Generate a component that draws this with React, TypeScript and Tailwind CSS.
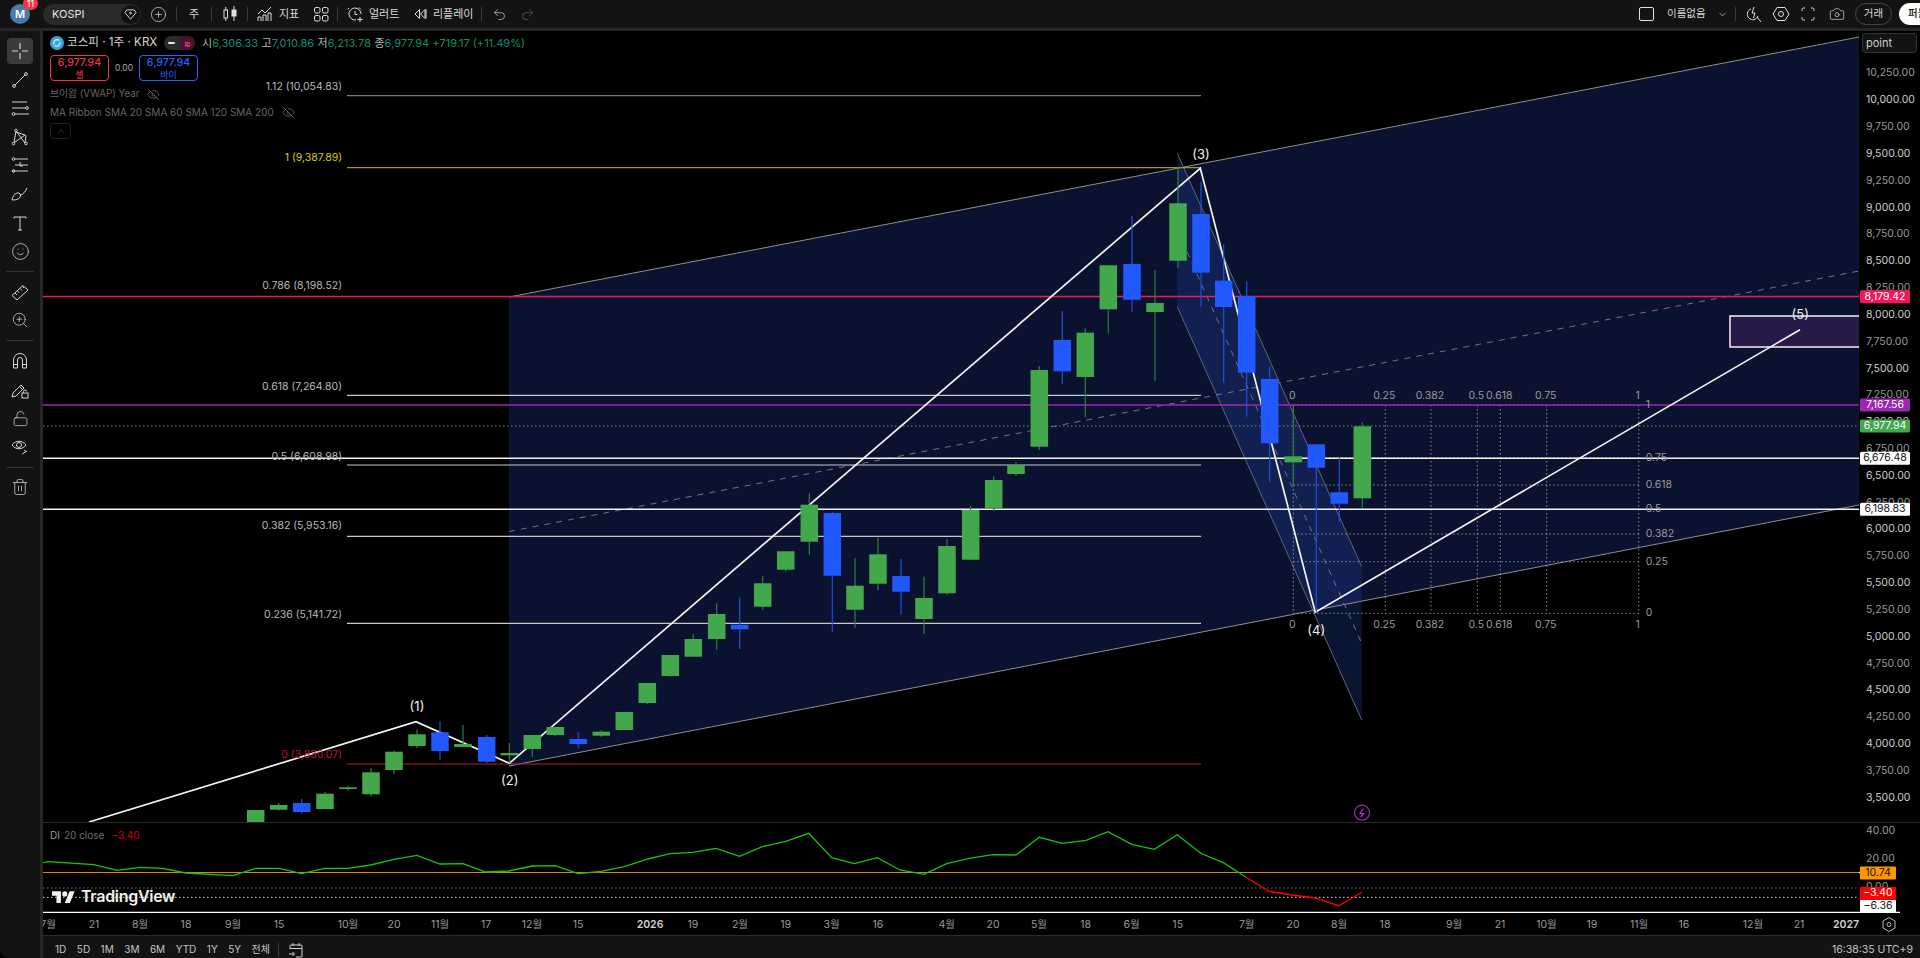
import { Camera, ChevronDown, CirclePlus, EyeOff, LockOpen, Redo2, Smile, Trash2, Undo2, ZoomIn } from "lucide-react";
import type { ReactNode } from "react";

// x, bodyTop, bodyBottom, wickTop, wickBottom, kind
type Candle = [number, number, number, number, number, "g" | "b"];

const candles: Candle[] = [
  [255.7, 810, 830, 810, 830, "g"],
  [278.7, 805, 809.7, 803, 810.7, "g"],
  [301.7, 803, 812, 799, 813.7, "b"],
  [325, 793.7, 809, 792, 809, "g"],
  [348, 787.3, 789, 786, 790.7, "g"],
  [371, 772.3, 794.3, 767.7, 796.7, "g"],
  [394, 751.7, 770, 750.7, 774.3, "g"],
  [417, 734.3, 746, 729.3, 748.3, "g"],
  [440, 732.3, 751, 721.3, 759.7, "b"],
  [463, 744, 747, 725, 747, "g"],
  [486.7, 737, 761.7, 735, 763.3, "b"],
  [509.3, 753, 755.3, 743, 763.3, "g"],
  [532.3, 735, 749, 735, 757, "g"],
  [555.3, 727, 735, 727, 736, "g"],
  [578.3, 739, 744, 732.3, 748, "b"],
  [601.3, 731.7, 735.7, 730.3, 737, "g"],
  [624.3, 712, 730, 712, 730, "g"],
  [647.3, 683, 703, 683, 704, "g"],
  [670.3, 655, 676, 655, 677, "g"],
  [693.3, 639, 656.7, 634, 657, "g"],
  [716.7, 614, 639, 603.3, 650, "g"],
  [739.7, 624.7, 629.3, 597.7, 649, "b"],
  [762.7, 583.3, 606.7, 576, 610, "g"],
  [785.7, 551.3, 569.7, 551.3, 571.7, "g"],
  [809.3, 504.7, 541.7, 493.3, 554.7, "g"],
  [832.3, 513, 575.7, 511.7, 631.7, "b"],
  [855, 585.7, 609.7, 558.3, 627.7, "g"],
  [878, 554.3, 583.7, 538, 590, "g"],
  [901, 576, 591.7, 559, 614.7, "b"],
  [924, 598, 619, 576.7, 633.7, "g"],
  [947, 546, 593.3, 539.3, 594.7, "g"],
  [970.7, 510, 559.7, 506, 559.7, "g"],
  [993.7, 480, 508, 476, 511, "g"],
  [1016, 465, 474, 462, 476, "g"],
  [1039.3, 370, 446.7, 366, 450, "g"],
  [1062.3, 340, 371.3, 311, 384, "b"],
  [1085.3, 332.7, 377, 328.3, 417.3, "g"],
  [1108.3, 265.3, 309.3, 265, 333.3, "g"],
  [1132, 264, 299.7, 216, 311.7, "b"],
  [1155, 303, 312, 270, 380.7, "g"],
  [1178, 203.3, 260.7, 166.7, 267.7, "g"],
  [1201, 214, 272.7, 181.7, 306.7, "b"],
  [1223.7, 280.7, 307, 244.3, 382.7, "b"],
  [1246.7, 296, 372.7, 281.3, 416.7, "b"],
  [1269.7, 379, 443.3, 366.7, 482.3, "b"],
  [1293.3, 456.3, 462.3, 406, 486, "g"],
  [1316.3, 444.3, 467.7, 444, 611.7, "b"],
  [1339.3, 492.3, 503.7, 457.7, 521.7, "b"],
  [1362.3, 426.3, 498.3, 422.3, 507.7, "g"],
];

const fibLevels = [
  { label: "1.12 (10,054.83)", y: 95.7, textY: 87, color: "#7a7a7a", text: "#b8b8b8" },
  { label: "1 (9,387.89)", y: 167.7, textY: 158, color: "#a4971c", text: "#d8c920" },
  { label: "0.786 (8,198.52)", y: 296.5, textY: 286.5, color: "#bdbdbd", text: "#b8b8b8" },
  { label: "0.618 (7,264.80)", y: 395.3, textY: 387, color: "#c8c8c8", text: "#b8b8b8" },
  { label: "0.5 (6,608.98)", y: 465, textY: 456.7, color: "#c8c8c8", text: "#b8b8b8" },
  { label: "0.382 (5,953.16)", y: 536.3, textY: 526.5, color: "#c8c8c8", text: "#b8b8b8" },
  { label: "0.236 (5,141.72)", y: 623.3, textY: 614.7, color: "#c8c8c8", text: "#b8b8b8" },
  { label: "0 (3,830.07)", y: 764, textY: 755, color: "#b71c2c", text: "#b71c2c" },
];

const gridX = [
  { x: 1293.3, label: "0" },
  { x: 1385.3, label: "0.25" },
  { x: 1431, label: "0.382" },
  { x: 1477.3, label: "0.5" },
  { x: 1500.3, label: "0.618" },
  { x: 1546.7, label: "0.75" },
  { x: 1638.7, label: "1" },
];

const gridY = [
  { y: 405, label: "1" },
  { y: 457.7, label: "0.75" },
  { y: 485, label: "0.618" },
  { y: 509.3, label: "0.5" },
  { y: 534, label: "0.382" },
  { y: 561.7, label: "0.25" },
  { y: 613.3, label: "0" },
];

const waves = [
  { label: "(1)", x: 417, y: 707.7 },
  { label: "(2)", x: 509.7, y: 781 },
  { label: "(3)", x: 1201, y: 155 },
  { label: "(4)", x: 1316.3, y: 631 },
  { label: "(5)", x: 1800.3, y: 315.5 },
];

const priceTags = [
  { label: "8,179.42", y: 296.7, bg: "#f0185b", fg: "#ffffff" },
  { label: "7,167.56", y: 405, bg: "#9c27b0", fg: "#ffffff" },
  { label: "6,977.94", y: 426, bg: "#43a84b", fg: "#ffffff" },
  { label: "6,676.48", y: 458.3, bg: "#ffffff", fg: "#111111" },
  { label: "6,198.83", y: 509.3, bg: "#ffffff", fg: "#111111" },
];

const diTags = [
  { label: "10.74", y: 873, bg: "#ff9800", fg: "#111111" },
  { label: "−3.40", y: 893.5, bg: "#ff0000", fg: "#ffffff" },
  { label: "−6.36", y: 906.5, bg: "#ffffff", fg: "#111111" },
];

const diGreen =
  "43,862.7 48,861.7 94,864.7 117,870.3 140,867.3 163,868.3 186,873 233,875.7 255.5,868.3 279,868.3 301.6,873.7 324.5,868.3 348,868.3 370.6,865 394,859.3 417,855.3 440,864 463,863.7 485.7,872 509,871 532,866 555,865.7 578,873.7 601,871.3 624.5,866.7 648,859 670,853.7 693,852.3 716,848.3 739.7,856.3 762.3,846.7 785.7,841.3 808.7,833.3 831.7,857.7 854.3,863.7 877.3,857.7 900,870 924,874.3 946.7,863.7 969.3,858.3 992.7,854.7 1016,855 1039.3,837.3 1062.3,843.3 1086,840.3 1108,831.7 1131.7,844.3 1154.3,849.3 1177.3,834.7 1200.7,853.3 1223.3,862.7 1245.7,877";
const diRed = "1245.7,877 1268.7,891.3 1291.7,895 1315,898 1338.7,905.7 1362,892.3";

const timeLabels: [number, string, boolean?][] = [
  [48, "7월"], [94, "21"], [140, "8월"], [186, "18"], [233, "9월"], [279, "15"], [348, "10월"], [394, "20"],
  [440, "11월"], [486, "17"], [532, "12월"], [578, "15"], [650, "2026", true], [693, "19"], [740, "2월"],
  [785.7, "19"], [831.7, "3월"], [878, "16"], [946.7, "4월"], [993, "20"], [1039, "5월"], [1085.7, "18"],
  [1131.7, "6월"], [1177.7, "15"], [1246.7, "7월"], [1293, "20"], [1339, "8월"], [1385, "18"], [1454, "9월"],
  [1500, "21"], [1546.5, "10월"], [1592, "19"], [1639, "11월"], [1684, "16"], [1753, "12월"], [1799, "21"],
  [1846, "2027", true],
];

const prices = Array.from({ length: 28 }, (_, i) => 10250 - i * 250);
const priceY = (p: number) => 315 + (8000 - p) * 0.1073;

const Draw = ({ size = 20, children }: { size?: number; children: ReactNode }) => (
  <svg width={size} height={size} viewBox="0 0 20 20" fill="none" stroke="#d4d4d4" strokeWidth="1">
    {children}
  </svg>
);

const Divider = () => <div className="h-[14px] w-px bg-[#3a3a3a]" />;

const ToolDivider = () => (
  <div className="flex h-[12px] items-center justify-center">
    <div className="h-px w-[28px] bg-[#333333]" />
  </div>
);

const Tool = ({ active, children }: { active?: boolean; children: ReactNode }) => (
  <div className="flex h-[28.6px] items-center justify-center">
    <div className={`flex h-[26px] w-[26px] items-center justify-center rounded-[4px] ${active ? "bg-[#3b3b3b]" : ""}`}>
      {children}
    </div>
  </div>
);

const LeftToolbar = () => (
  <div className="flex w-[40px] flex-col rounded-bl-[10px] bg-[#131313] pt-[5.7px]">
    <Tool active>
      <Draw>
        <path d="M10 2v6M10 12v6M2 10h6M12 10h6" strokeWidth="1.2" />
      </Draw>
    </Tool>
    <Tool>
      <Draw>
        <path d="M5 15 15 5" />
        <circle cx="4" cy="16" r="1.4" />
        <circle cx="16" cy="4" r="1.4" />
      </Draw>
    </Tool>
    <Tool>
      <Draw>
        <path d="M2 4h15M2 10h13M5 16h14" />
        <circle cx="17" cy="10" r="1.4" />
        <circle cx="3.5" cy="16" r="1.4" />
      </Draw>
    </Tool>
    <Tool>
      <Draw>
        <path d="M4 16 6 4l9 12 1-8M5 15l10-7M6 5l9 3" />
        <circle cx="6" cy="3.5" r="1.3" />
        <circle cx="3.5" cy="16.5" r="1.3" />
        <circle cx="16" cy="16.5" r="1.3" />
      </Draw>
    </Tool>
    <Tool>
      <Draw>
        <path d="M5 4h13M2 16h16M5 10h13" />
        <circle cx="3.5" cy="4" r="1.3" />
        <circle cx="3.5" cy="16" r="1.3" />
        <path d="M10 7v4h3" />
      </Draw>
    </Tool>
    <Tool>
      <Draw>
        <path d="M2 16c.5-3 2-6 5-7 2-.5 4 1 3.5 3-.5 2.5-3 4-8.5 4Z" />
        <path d="M9 9c.5 1 1 1.5 2 2 2-.5 4-3 6-7" />
      </Draw>
    </Tool>
    <Tool>
      <Draw>
        <path d="M4 4h12M10 4v13M8 17h4M4 4v1.5M16 4v1.5" />
      </Draw>
    </Tool>
    <Tool>
      <Smile size={19} strokeWidth={1} color="#d4d4d4" />
    </Tool>
    <ToolDivider />
    <Tool>
      <Draw>
        <path d="m2 13.5 11-10 5 4.5-11 10Z" />
        <path d="m5 11 2 2M7.5 8.7l1.5 2M10 6.5l2 2M12.5 4.500l1.5 1.5" />
      </Draw>
    </Tool>
    <Tool>
      <ZoomIn size={18} strokeWidth={1} color="#d4d4d4" />
    </Tool>
    <ToolDivider />
    <Tool>
      <Draw>
        <path d="M3.5 17V9a6.5 6.5 0 0 1 13 0v8h-4V9a2.5 2.5 0 0 0-5 0v8ZM3.5 13.5h4M12.5 13.5h4" />
      </Draw>
    </Tool>
    <Tool>
      <Draw>
        <path d="m2 17 1-4 8-8 3 3-8 8ZM9.5 6.5l3 3" />
        <rect x="12" y="13" width="6" height="5" />
        <path d="M13.5 13v-1.5a1.5 1.5 0 0 1 3 0" />
      </Draw>
    </Tool>
    <Tool>
      <LockOpen size={17} strokeWidth={1} color="#d4d4d4" />
    </Tool>
    <Tool>
      <Draw>
        <path d="M2 8c3.5-5 10.5-5 14 0-3.5 5-10.5 5-14 0Z" />
        <circle cx="9" cy="8" r="2.5" />
        <path d="m12 17 5-3M14 13l2 1.5" />
      </Draw>
    </Tool>
    <ToolDivider />
    <Tool>
      <Trash2 size={18} strokeWidth={1} color="#d4d4d4" />
    </Tool>
  </div>
);

const TopBar = () => (
  <div className="flex h-[31px] items-center overflow-hidden border-b-[3px] border-[#262626] bg-[#131313] text-[11px] text-[#d8d8d8]">
    <div className="relative flex w-[43px] items-center pl-[10px]">
      <div className="flex h-[20px] w-[20px] items-center justify-center rounded-full bg-[#4b7ca8] text-[11px] font-semibold text-white">
        M
      </div>
      <div className="absolute left-[23px] top-[-7px] flex h-[13px] min-w-[15px] items-center justify-center rounded-full bg-[#f23645] text-[9px] text-white">
        11
      </div>
    </div>
    <div className="flex h-[21px] w-[98px] items-center justify-between rounded-full bg-[#2a2a2a] pl-[9px] pr-[1px]">
      <span className="text-[11px] text-[#e4e4e4]">KOSPI</span>
      <div className="flex h-[19px] w-[19px] items-center justify-center rounded-full bg-[#111111]">
        <svg width="13" height="13" viewBox="0 0 14 14" fill="none" stroke="#e0e0e0" strokeWidth="1">
          <path d="M3 2h8l2 3-6 7-6-7Z" />
          <circle cx="7" cy="5.5" r="1" />
        </svg>
      </div>
    </div>
    <div className="flex w-[35px] justify-center">
      <CirclePlus size={17} strokeWidth={1} color="#e0e0e0" />
    </div>
    <Divider />
    <div className="flex w-[34px] justify-center">주</div>
    <Divider />
    <div className="flex w-[35px] justify-center">
      <svg width="16" height="18" viewBox="0 0 16 18" fill="none" stroke="#e0e0e0" strokeWidth="1">
        <rect x="2" y="5" width="3.5" height="8" />
        <path d="M3.75 2v3M3.75 13v3M12 1v4M12 11v5" />
        <rect x="10" y="5" width="4" height="6" fill="#e0e0e0" />
      </svg>
    </div>
    <Divider />
    <div className="flex w-[57px] items-center gap-[6px] pl-[9px]">
      <svg width="16" height="16" viewBox="0 0 16 16" fill="none" stroke="#e0e0e0" strokeWidth="1" className="shrink-0">
        <path d="M1 8 5 4l3 3 6-6M1 15v-4h3v4M6 15V9h3v6M11 15V7h3v8" />
      </svg>
      <span className="whitespace-nowrap">지표</span>
    </div>
    <div className="flex w-[32px] justify-center">
      <svg width="16" height="16" viewBox="0 0 16 16" fill="none" stroke="#e0e0e0" strokeWidth="1">
        <rect x="1.5" y="1.5" width="5.5" height="5.5" rx="1.5" />
        <rect x="9.5" y="1.5" width="5.5" height="5.5" rx="1.5" />
        <rect x="1.5" y="9.5" width="5.5" height="5.5" rx="1.5" />
        <rect x="9.5" y="9.5" width="5.5" height="5.5" rx="1.5" />
      </svg>
    </div>
    <Divider />
    <div className="flex w-[72px] items-center gap-[6px] pl-[9px]">
      <svg width="16" height="17" viewBox="0 0 16 17" fill="none" stroke="#e0e0e0" strokeWidth="1" className="shrink-0">
        <path d="M14 8a6 6 0 1 0-5 5.9M8 5v3.5h2.5M2 2 .8 3.5M12 1.5l1.8 1.8M13 11v5M10.5 13.5h5" />
      </svg>
      <span className="whitespace-nowrap">얼러트</span>
    </div>
    <div className="flex w-[71px] items-center gap-[6px] pl-[3px]">
      <svg width="14" height="14" viewBox="0 0 14 14" fill="none" stroke="#e0e0e0" strokeWidth="1" className="shrink-0">
        <path d="M6.5 2.5 2 7l4.5 4.5ZM12 2.5 7.5 7l4.5 4.5ZM13 2.5v9" />
      </svg>
      <span className="whitespace-nowrap">리플레이</span>
    </div>
    <Divider />
    <div className="flex w-[35px] justify-center">
      <Undo2 size={15} strokeWidth={1} color="#e0e0e0" />
    </div>
    <div className="flex w-[20px] justify-center">
      <Redo2 size={15} strokeWidth={1} color="#666666" />
    </div>
    <div className="ml-auto flex w-[281px] shrink-0 items-center overflow-hidden">
      <div className="h-[14px] w-[15px] shrink-0 rounded-[2px] border border-[#e0e0e0]" />
      <span className="ml-[13px] w-[37px] shrink-0 whitespace-nowrap text-[10.5px]">이름없음</span>
      <ChevronDown size={11} strokeWidth={1.5} color="#d0d0d0" className="ml-[13px] shrink-0" />
      <div className="ml-[7px] shrink-0">
        <Divider />
      </div>
      <div className="ml-[10px] shrink-0">
        <svg width="16" height="17" viewBox="0 0 16 17" fill="none" stroke="#e0e0e0" strokeWidth="1">
          <path d="M5 3a5.5 5.5 0 1 0 7 7M11 11l4 5M8 1 6 7h3L7.5 12" />
        </svg>
      </div>
      <svg width="18" height="18" viewBox="0 0 18 18" fill="none" stroke="#e0e0e0" strokeWidth="1" className="ml-[10px] shrink-0">
        <path d="M1 9 5 2.5h8L17 9l-4 6.5H5Z" />
        <circle cx="9" cy="9" r="2.5" />
      </svg>
      <div className="ml-[11px] shrink-0">
        <svg width="14" height="14" viewBox="0 0 14 14" fill="none" stroke="#e0e0e0" strokeWidth="1">
          <path d="M1 4V2.5A1.5 1.5 0 0 1 2.5 1H4M10 1h1.5A1.5 1.5 0 0 1 13 2.5V4M13 10v1.5a1.5 1.5 0 0 1-1.5 1.5H10M4 13H2.5A1.5 1.5 0 0 1 1 11.5V10" />
        </svg>
      </div>
      <Camera size={16} strokeWidth={1} color="#e0e0e0" className="ml-[14px] shrink-0" />
      <div className="ml-[10px] flex h-[22px] w-[37px] shrink-0 items-center justify-center rounded-full border border-[#444444] text-[10.5px]">
        거래
      </div>
      <div className="ml-[7px] flex h-[22px] w-[60px] shrink-0 items-center whitespace-nowrap rounded-full bg-white pl-[9px] text-[10.5px] font-medium text-[#111111]">
        퍼블리시
      </div>
    </div>
  </div>
);

const Legend = () => (
  <div className="absolute left-[7px] top-[4px] flex flex-col">
    <div className="flex h-[16px] items-center whitespace-nowrap">
      <svg width="14" height="14" viewBox="0 0 14 14" className="mr-[3px]">
        <circle cx="7" cy="7" r="7" fill="#39a5d6" />
        <path d="M9.5 4.5A3.5 3.5 0 0 0 4 8.5M4.5 9.5A3.5 3.5 0 0 0 10 6" fill="none" stroke="#d9f1fb" strokeWidth="1.2" />
      </svg>
      <span className="w-[91px] text-[11.6px] text-[#d8d8d8]">코스피 · 1주 · KRX</span>
      <div className="ml-[6px] flex h-[14px] w-[31px] overflow-hidden rounded-full bg-[#2b2b2b]">
        <div className="flex w-1/2 items-center justify-center">
          <div className="h-[2.5px] w-[7px] rounded-full bg-[#e8e8e8]" />
        </div>
        <div className="flex w-1/2 items-center justify-center bg-[#4a1230] text-[10px] leading-none text-[#ff4d94]">≈</div>
      </div>
      <div className="ml-[7px] flex gap-[3.5px] text-[11px] text-[#0f8f72]">
        <span><span className="text-[#b8b8b8]">시</span>6,306.33</span>
        <span><span className="text-[#b8b8b8]">고</span>7,010.86</span>
        <span><span className="text-[#b8b8b8]">저</span>6,213.78</span>
        <span><span className="text-[#b8b8b8]">종</span>6,977.94</span>
        <span>+719.17 (+11.49%)</span>
      </div>
    </div>
    <div className="mt-[4px] flex h-[26px] items-center">
      <div className="flex h-[26px] w-[59px] flex-col items-center justify-center rounded-[4px] border border-[#f23645] text-[#f23645]">
        <span className="text-[10.5px] font-medium leading-[12px]">6,977.94</span>
        <span className="text-[9px] leading-[11px]">셀</span>
      </div>
      <span className="w-[30px] text-center text-[8.5px] text-[#a8a8a8]">0.00</span>
      <div className="flex h-[26px] w-[59px] flex-col items-center justify-center rounded-[4px] border border-[#2962ff] text-[#2962ff]">
        <span className="text-[10.5px] font-medium leading-[12px]">6,977.94</span>
        <span className="text-[9px] leading-[11px]">바이</span>
      </div>
    </div>
    <div className="mt-[5px] flex h-[16px] items-center gap-[8px] text-[9.8px] text-[#666666]">
      <span>브이왑 (VWAP) Year</span>
      <EyeOff size={13} strokeWidth={1} color="#a0a0a0" />
    </div>
    <div className="mt-[2px] flex h-[16px] items-center gap-[8px] text-[10px] text-[#666666]">
      <span>MA Ribbon SMA 20 SMA 60 SMA 120 SMA 200</span>
      <EyeOff size={13} strokeWidth={1} color="#a0a0a0" />
    </div>
    <div className="mt-[3px] flex h-[16px] w-[21px] items-center justify-center rounded-[3px] border border-[#1f1f1f]">
      <ChevronDown size={10} color="#3a3a3a" className="rotate-180" />
    </div>
  </div>
);

const MainChart = () => (
  <svg className="block h-[791px] flex-1" viewBox="43 31 1816 791" fontSize="10.5">
    {/* channel fill */}
    <polygon points="509,297 1859,37 1859,505 509,766" fill="#0b1230" />
    <polygon points="1177.3,153.3 1361.7,566.7 1361.7,720 1177.3,306.7" fill="rgba(30,60,140,0.35)" />
    <path d="M509 297 1859 37M509 766 1859 505" stroke="#8d8f96" strokeWidth="1" />
    <path d="M509 531.5 1859 271" stroke="#6d7284" strokeWidth="1" strokeDasharray="6 6" />
    <path d="M1177.3 153.3 1361.7 566.7M1177.3 306.7 1361.7 720" stroke="#5f6578" strokeWidth="1" />
    <path d="M1177.3 230 1361.7 643.3" stroke="#6d7284" strokeWidth="1" strokeDasharray="6 6" />

    {/* fib retracement */}
    {fibLevels.map((f) => (
      <path key={f.label} d={`M347 ${f.y}H1201`} stroke={f.color} strokeWidth="1.2" />
    ))}

    {/* fib grid */}
    {gridX.map((g) => (
      <path key={g.label} d={`M${g.x} 405V613.3`} stroke="#8b8f9c" strokeWidth="1" strokeDasharray="1.5 2.5" />
    ))}
    {gridY.map((g) => (
      <path key={g.label} d={`M1293.3 ${g.y}H1638.7`} stroke="#8b8f9c" strokeWidth="1" strokeDasharray="1.5 2.5" />
    ))}

    {/* horizontal levels */}
    <path d="M43 296.5H1859" stroke="#f0185b" strokeWidth="1.5" />
    <path d="M43 405H1859" stroke="#9c27b0" strokeWidth="1.5" />
    <path d="M43 426H1859" stroke="#43a84b" strokeWidth="1" strokeDasharray="1.5 2.5" />
    <path d="M43 458.3H1859M43 509.3H1859" stroke="#f2f2f2" strokeWidth="1.4" />

    <rect x="1730" y="316" width="140" height="31" fill="#261a48" stroke="#f2f2f2" strokeWidth="1.5" />

    {/* elliott waves */}
    <polyline
      points="89,822 416,721.7 509.3,763.3 1200.3,168.3 1315.3,612.3 1800,329.7"
      fill="none"
      stroke="#f5f5f5"
      strokeWidth="1.7"
    />

    {candles.map(([x, top, bottom, wickTop, wickBottom, kind]) => (
      <g key={x}>
        <path d={`M${x} ${wickTop}V${wickBottom}`} stroke={kind === "g" ? "#2f8039" : "#2050dc"} strokeWidth="1.2" />
        <rect x={x - 8.75} y={top} width="17.5" height={bottom - top} fill={kind === "g" ? "#43a84b" : "#2159ff"} />
      </g>
    ))}

    {fibLevels.map((f) => (
      <text key={f.label} x="342" y={f.textY} fill={f.text} textAnchor="end" dominantBaseline="middle">
        {f.label}
      </text>
    ))}
    {gridX.map((g) => (
      <g key={g.label} fill="#9a9a9a" textAnchor="middle">
        <text x={g.x - 1} y="395.7" dominantBaseline="middle">{g.label}</text>
        <text x={g.x - 1} y="625" dominantBaseline="middle">{g.label}</text>
      </g>
    ))}
    {gridY.map((g) => (
      <text key={g.label} x="1645.7" y={g.y} fill="#9a9a9a" dominantBaseline="middle">{g.label}</text>
    ))}
    {waves.map((w) => (
      <text key={w.label} x={w.x} y={w.y} fill="#f0f0f0" fontSize="13" textAnchor="middle" dominantBaseline="middle">
        {w.label}
      </text>
    ))}

    <circle cx="1362" cy="812.7" r="7.5" fill="none" stroke="#9c27b0" strokeWidth="1.2" />
    <path d="M1363.5 808.5 1360 813.5h3.5L1360.5 817" fill="none" stroke="#b53acb" strokeWidth="1.2" />
  </svg>
);

const PriceAxis = () => (
  <svg className="block h-[791px] w-[61px] shrink-0" viewBox="1859 31 61 791" fontSize="10.5">
    {prices.map((p) => (
      <text
        key={p}
        x="1866"
        y={priceY(p)}
        fill={p % 500 === 0 ? "#cfcfcf" : "#9a9a9a"}
        dominantBaseline="middle"
      >
        {p.toLocaleString("en-US", { minimumFractionDigits: 2 })}
      </text>
    ))}
    {priceTags.map((t) => (
      <g key={t.label}>
        <rect x="1860" y={t.y - 6.5} width="50" height="13" rx="1.5" fill={t.bg} />
        <text x="1885" y={t.y} fill={t.fg} textAnchor="middle" dominantBaseline="middle">{t.label}</text>
      </g>
    ))}
  </svg>
);

const DiChart = () => (
  <svg className="block h-[90px] flex-1" viewBox="43 823 1816 90">
    <path d="M43 872.5H1859" stroke="#e07f10" strokeWidth="1.2" />
    <path d="M43 888H1859" stroke="#777777" strokeWidth="1" strokeDasharray="1.5 2.5" />
    <path d="M43 897.3H1859" stroke="#dddddd" strokeWidth="1" strokeDasharray="1.5 2.5" />
    <path d="M43 912.5H1859" stroke="#ffffff" strokeWidth="1.5" />
    <polyline points={diGreen} fill="none" stroke="#16c416" strokeWidth="1.3" />
    <polyline points={diRed} fill="none" stroke="#ff0000" strokeWidth="1.3" />
  </svg>
);

const DiAxis = () => (
  <svg className="block h-[90px] w-[61px] shrink-0" viewBox="1859 823 61 90" fontSize="10.5">
    <path d="M1859 872.5H1861M1859 912.5H1900" stroke="#ffffff" strokeWidth="1.5" />
    <text x="1866" y="830.7" fill="#9a9a9a" dominantBaseline="middle">40.00</text>
    <text x="1866" y="859.3" fill="#9a9a9a" dominantBaseline="middle">20.00</text>
    <text x="1866" y="886.7" fill="#9a9a9a" dominantBaseline="middle">0.00</text>
    {diTags.map((t) => (
      <g key={t.label}>
        <rect x="1860" y={t.y - 6.5} width="36" height="13" rx="1" fill={t.bg} />
        <text x="1878" y={t.y} fill={t.fg} textAnchor="middle" dominantBaseline="middle">{t.label}</text>
      </g>
    ))}
  </svg>
);

const TimeAxis = () => (
  <svg className="block h-[22px] w-full" viewBox="43 913 1877 22" fontSize="10.5">
    {timeLabels.map(([x, label, strong]) => (
      <text
        key={`${x}-${label}`}
        x={x}
        y="925"
        fill={strong ? "#d0d0d0" : "#9a9a9a"}
        fontWeight={strong ? 600 : 400}
        textAnchor="middle"
        dominantBaseline="middle"
      >
        {label}
      </text>
    ))}
    <polygon points="1889,917.5 1895,921 1895,928 1889,931.5 1883,928 1883,921" fill="none" stroke="#bdbdbd" strokeWidth="1" />
    <circle cx="1889" cy="924.5" r="2" fill="none" stroke="#bdbdbd" strokeWidth="1" />
  </svg>
);

const BottomBar = () => (
  <div className="flex h-[23px] items-center border-t border-[#2a2a2a] bg-[#131313] pt-[5px] text-[10px] text-[#c4c4c4]">
    <div className="flex items-center gap-[10.5px] pl-[12px]">
      {["1D", "5D", "1M", "3M", "6M", "YTD", "1Y", "5Y", "전체"].map((r) => (
        <span key={r}>{r}</span>
      ))}
    </div>
    <div className="ml-[8px] h-[14px] w-px bg-[#3a3a3a]" />
    <svg width="16" height="16" viewBox="0 0 16 16" fill="none" stroke="#d0d0d0" strokeWidth="1" className="ml-[9px]">
      <path d="M2 7V4a1 1 0 0 1 1-1h10a1 1 0 0 1 1 1v10a1 1 0 0 1-1 1H8M2 6.5h12M5 1v3M11 1v3M1 12h5M4.5 10l2 2-2 2" />
    </svg>
    <span className="ml-auto pr-[7px] text-[10.5px]">16:38:35 UTC+9</span>
  </div>
);

export default function App() {
  return (
    <div className="flex h-screen w-full flex-col overflow-hidden bg-black font-[Inter,'Noto_Sans_CJK_KR',sans-serif]">
      <TopBar />
      <div className="flex flex-1">
        <LeftToolbar />
        <div className="w-[3px] bg-[#262626]" />
        <div className="flex min-w-0 flex-1 flex-col">
          <div className="relative flex bg-black">
            <MainChart />
            <PriceAxis />
            <Legend />
            <div className="absolute right-[3px] top-[2px] flex h-[20px] w-[55px] items-center rounded-[3px] border border-[#333333] bg-[#131313] pl-[3px] text-[11px] text-[#d0d0d0]">
              point
            </div>
          </div>
          <div className="h-px bg-[#2a2a2a]" />
          <div className="relative flex bg-black">
            <DiChart />
            <DiAxis />
            <div className="absolute left-[7px] top-[5px] flex items-center gap-[4px] text-[10px]">
              <span className="text-[#9a9a9a]">DI</span>
              <span className="text-[#6e6e6e]">20 close</span>
              <span className="ml-[3px] text-[#d40000]">−3.40</span>
            </div>
            <div className="absolute left-[9px] top-[64px] flex items-center gap-[6px]">
              <svg width="23" height="13" viewBox="0 0 36 20" fill="#f2f2f2" preserveAspectRatio="none">
                <path d="M14 20H7V9H0V2h14v18ZM28 20h-8l7.5-18h8L28 20Z" />
                <circle cx="20" cy="6" r="4" />
              </svg>
              <span className="text-[16px] font-semibold leading-[18px] tracking-[-0.3px] text-[#f2f2f2]">TradingView</span>
            </div>
          </div>
          <div className="bg-black">
            <TimeAxis />
          </div>
          <BottomBar />
        </div>
      </div>
    </div>
  );
}
